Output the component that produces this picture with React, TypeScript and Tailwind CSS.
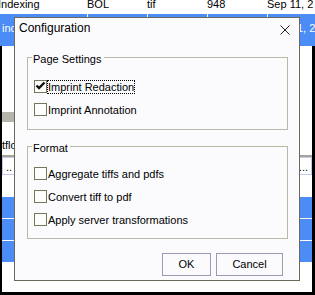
function Box({ checked }: { checked?: boolean }) {
  return (
    <span className="w-[13px] h-[13px] border border-[#76765c] bg-[#fdfdfb] flex items-center justify-center shrink-0">
      {checked && (
        <svg width="11" height="11" viewBox="0 0 11 11">
          <polyline points="1.5,4.5 4,7 9.5,1.5" fill="none" stroke="#111" strokeWidth="2.4" />
        </svg>
      )}
    </span>
  );
}

function Check({ label, checked, focused }: { label: string; checked?: boolean; focused?: boolean }) {
  return (
    <div className="flex items-start">
      <Box checked={checked} />
      <span
        className={`border border-dotted leading-[12px] whitespace-nowrap ${
          focused ? "border-black" : "border-transparent"
        }`}
      >
        {label}
      </span>
    </div>
  );
}

function Group({ title, pt, pb, children }: { title: string; pt: string; pb: string; children: React.ReactNode }) {
  return (
    <fieldset className={`ml-[12px] w-[261px] border border-[#bab9a8] pl-[6px] ${pt} ${pb}`}>
      <legend className="ml-[-2px] pl-[1px] pr-[2px] pt-[4px] leading-[11px]">{title}</legend>
      <div className="flex flex-col gap-[9px]">{children}</div>
    </fieldset>
  );
}

export default function App() {
  return (
    <div className="relative w-[315px] h-[295px] overflow-hidden bg-white text-[11px] leading-[13px] text-black font-['Liberation_Sans',Arial,sans-serif]">
      {/* grid behind the dialog */}
      <div className="h-[14px] flex overflow-hidden whitespace-nowrap">
        <div className="w-[87px] shrink-0 -mt-[2px] -ml-[2px]">Indexing</div>
        <div className="w-[60px] shrink-0 -mt-[2px] border-l border-white pl-[1px]">BOL</div>
        <div className="w-[60px] shrink-0 -mt-[2px] border-l border-white pl-[1px]">tif</div>
        <div className="w-[60px] shrink-0 -mt-[2px] border-l border-white pl-[1px]">948</div>
        <div className="w-[60px] shrink-0 -mt-[2px] border-l border-white pl-[1px]">Sep 11, 2</div>
      </div>
      <div className="h-[32px] flex overflow-hidden whitespace-nowrap bg-[#4b8cf7] text-white">
        <div className="w-[87px] shrink-0 pt-[8px] pl-[2px]">inc</div>
        <div className="w-[60px] shrink-0 border-l border-white" />
        <div className="w-[60px] shrink-0 border-l border-white" />
        <div className="w-[60px] shrink-0 border-l border-white" />
        <div className="w-[60px] shrink-0 border-l border-white pt-[8px] pl-[1px]">Sep 11, 2</div>
      </div>
      <div className="h-[246px] flex">
        <div className="w-[2px] bg-black" />
        <div className="flex-1 flex flex-col">
          <div className="h-[66px]" />
          <div className="w-[12px] h-[10px] bg-[#b5b4ab]" />
          <div className="mt-[17px] h-[13px]">tflow</div>
          <div className="mt-[3px] h-[2px] bg-[#a6a698]" />
          <div className="h-[18px] border border-[#c8c8ef] flex justify-between items-end px-[3px] pb-[2px] leading-[10px]">
            <span>..</span>
            <span>...</span>
          </div>
          <div className="mt-[22px] h-[22px] bg-[#4b8cf7] border-b border-white" />
          <div className="h-[22px] bg-[#4b8cf7] border-b border-white" />
          <div className="h-[21px] bg-[#4b8cf7]" />
        </div>
        <div className="w-[3px] bg-black" />
      </div>
      <div className="h-[3px] bg-black" />

      {/* dialog */}
      <div className="absolute left-[14px] top-[17px] w-[286px] h-[264px] border border-[#6b6a5a] bg-[#fbfbfe] flex flex-col">
        <div className="mt-[3px] h-[15px] flex justify-between items-center pl-[4px] pr-[9px]">
          <span className="text-[12px] leading-[15px]">Configuration</span>
          <svg width="10" height="10" viewBox="0 0 10 10" className="mt-[2px]">
            <path d="M0.5 0.5 L9.5 9.5 M9.5 0.5 L0.5 9.5" stroke="#222" strokeWidth="1" />
          </svg>
        </div>

        <div className="mt-[14px]">
          <Group title="Page Settings" pt="pt-[15px]" pb="pb-[12px]">
            <Check label="Imprint Redaction" checked focused />
            <Check label="Imprint Annotation" />
          </Group>
        </div>

        <div className="mt-[9px]">
          <Group title="Format" pt="pt-[13px]" pb="pb-[11px]">
            <Check label="Aggregate tiffs and pdfs" />
            <Check label="Convert tiff to pdf" />
            <Check label="Apply server transformations" />
          </Group>
        </div>

        <div className="mt-[14px] flex justify-end gap-[5px] pr-[16px]">
          <button className="w-[49px] h-[23px] border border-[#9d99b5] bg-[#fbfbfe]">OK</button>
          <button className="w-[67px] h-[23px] border border-[#9d99b5] bg-[#fbfbfe]">Cancel</button>
        </div>
      </div>
    </div>
  );
}
